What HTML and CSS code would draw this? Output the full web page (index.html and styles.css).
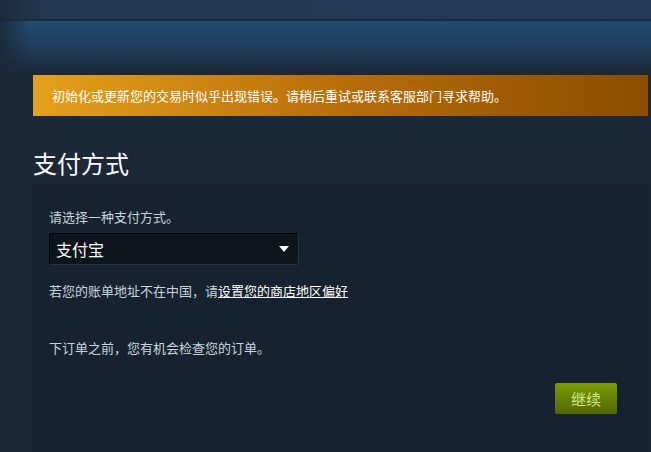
FILE: index.html
```html
<!DOCTYPE html>
<html lang="zh-CN">
<head>
<meta charset="utf-8">
<title>支付方式</title>
<link rel="stylesheet" href="styles.css">
</head>
<body>
<div class="header">
  <div class="header-band"></div>
  <div class="header-line"></div>
  <div class="header-glow"></div>
</div>
<div class="page">
  <div class="error-banner">初始化或更新您的交易时似乎出现错误。请稍后重试或联系客服部门寻求帮助。</div>
  <h1 class="title">支付方式</h1>
  <div class="panel">
    <div class="label">请选择一种支付方式。</div>
    <div class="select">
      <span class="select-value">支付宝</span>
      <svg class="select-arrow" width="10" height="6" viewBox="0 0 10 6"><path d="M0 0 L10 0 L5 6 Z" fill="#ffffff"/></svg>
    </div>
    <div class="note">若您的账单地址不在中国，请<a class="link" href="#">设置您的商店地区偏好</a></div>
    <div class="review">下订单之前，您有机会检查您的订单。</div>
    <div class="actions">
      <a class="btn-continue" href="#">继续</a>
    </div>
  </div>
</div>
</body>
</html>
```
FILE: styles.css
```css
html, body {
  margin: 0;
  padding: 0;
  background: #1b2838;
  height: 100%;
  overflow: hidden;
}
body {
  font-family: "Noto Sans CJK SC", "Liberation Sans", sans-serif;
  color: #c6d4df;
}
.header {
  height: 75px;
  display: flex;
  flex-direction: column;
}
.header-band {
  height: 19px;
  background: linear-gradient(to right, #1c2b3d 0px, #22384f 45px, #233b57 100%);
}
.header-line {
  height: 2px;
  background: #1a2b40;
}
.header-glow {
  flex: 1;
  background:
    linear-gradient(to right, rgba(27,40,56,0.9) 0px, rgba(27,40,56,0) 30px),
    linear-gradient(to bottom, #214c70 0%, #1f3f5e 45%, #1b2838 95%);
}
.page {
  margin-left: 33px;
  width: 615px;
}
.error-banner {
  height: 41px;
  display: flex;
  align-items: center;
  padding-left: 19px;
  font-size: 13px;
  color: #ffffff;
  background: linear-gradient(to right, #e5a11b 0%, #b86d0a 50%, #8a4d00 100%);
  box-sizing: border-box;
}
.title {
  margin: 32px 0 7px 0;
  font-size: 24px;
  line-height: 30px;
  font-weight: normal;
  color: #ffffff;
}
.panel {
  background: rgba(0, 0, 0, 0.15);
  box-shadow: 0 0 3px rgba(0,0,0,0.15);
  padding: 23px 0 60px 16px;
  font-size: 13px;
  line-height: 18px;
}
.label {
  color: #c6d4df;
}
.select {
  margin-top: 7px;
  width: 250px;
  height: 32px;
  box-sizing: border-box;
  background: #0e141b;
  border: 1px solid #000;
  border-right-color: #2a3444;
  border-bottom-color: #2a3444;
  border-radius: 3px;
  display: flex;
  align-items: center;
  justify-content: space-between;
  padding: 0 9px 0 6px;
}
.select-value {
  font-size: 16px;
  color: #ffffff;
}
.select-arrow {
  display: block;
}
.note {
  margin-top: 17px;
  color: #c6d4df;
}
.link {
  color: #ffffff;
  text-decoration: underline;
}
.review {
  margin-top: 39px;
  color: #c6d4df;
}
.actions {
  margin-top: 26px;
  display: flex;
  justify-content: flex-end;
  padding-right: 31px;
}
.btn-continue {
  width: 62px;
  height: 31px;
  display: flex;
  align-items: center;
  justify-content: center;
  border-radius: 2px;
  background: linear-gradient(to bottom, #799905 5%, #536904 95%);
  color: #d2e885;
  font-size: 15px;
  text-decoration: none;
}
```
